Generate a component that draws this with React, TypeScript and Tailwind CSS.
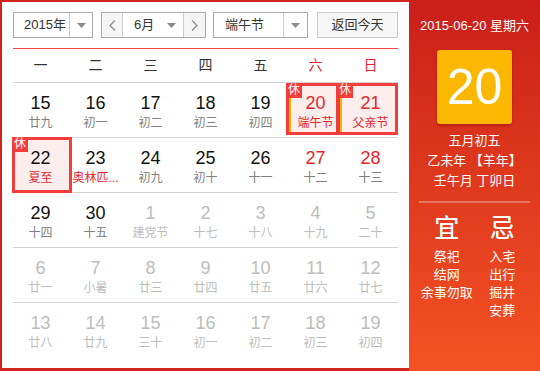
import React from 'react'

type Day = {
  n: number
  l: string
  other?: boolean
  fest?: boolean
  mark?: 'a' | 'b' | 'c'
  red?: boolean
}

const rows: Day[][] = [
  [
    { n: 15, l: '廿九' },
    { n: 16, l: '初一' },
    { n: 17, l: '初二' },
    { n: 18, l: '初三' },
    { n: 19, l: '初四' },
    { n: 20, l: '端午节', fest: true, red: true, mark: 'a' },
    { n: 21, l: '父亲节', fest: true, red: true, mark: 'b' },
  ],
  [
    { n: 22, l: '夏至', fest: true, mark: 'c' },
    { n: 23, l: '奥林匹...', fest: true },
    { n: 24, l: '初九' },
    { n: 25, l: '初十' },
    { n: 26, l: '十一' },
    { n: 27, l: '十二', red: true },
    { n: 28, l: '十三', red: true },
  ],
  [
    { n: 29, l: '十四' },
    { n: 30, l: '十五' },
    { n: 1, l: '建党节', other: true },
    { n: 2, l: '十七', other: true },
    { n: 3, l: '十八', other: true },
    { n: 4, l: '十九', other: true },
    { n: 5, l: '二十', other: true },
  ],
  [
    { n: 6, l: '廿一', other: true },
    { n: 7, l: '小暑', other: true },
    { n: 8, l: '廿三', other: true },
    { n: 9, l: '廿四', other: true },
    { n: 10, l: '廿五', other: true },
    { n: 11, l: '廿六', other: true },
    { n: 12, l: '廿七', other: true },
  ],
  [
    { n: 13, l: '廿八', other: true },
    { n: 14, l: '廿九', other: true },
    { n: 15, l: '三十', other: true },
    { n: 16, l: '初一', other: true },
    { n: 17, l: '初二', other: true },
    { n: 18, l: '初三', other: true },
    { n: 19, l: '初四', other: true },
  ],
]

const weekdays = ['一', '二', '三', '四', '五', '六', '日']

function Caret() {
  return (
    <svg width="9" height="5" viewBox="0 0 9 5" className="block">
      <path d="M0 0h9L4.5 5z" fill="#8a8a8a" />
    </svg>
  )
}

function Chevron({ dir }: { dir: 'l' | 'r' }) {
  return (
    <svg width="7" height="11" viewBox="0 0 7 11" className="block">
      <path
        d={dir === 'l' ? 'M6 0.5L1 5.5l5 5' : 'M1 0.5l5 5-5 5'}
        fill="none"
        stroke="#8a8a8a"
        strokeWidth="1.2"
      />
    </svg>
  )
}

// red frame + 休 badge behind the day text
function MarkBox({ mark }: { mark: 'a' | 'b' | 'c' }) {
  const pos =
    mark === 'a'
      ? 'top-0 bottom-[2px] -left-[2px] right-[4px]'
      : mark === 'b'
        ? 'top-0 bottom-[2px] -left-[6px] right-0'
        : '-top-px -bottom-px -left-[1px] -right-[4px]'
  return (
    <div className={`absolute ${pos} border-[3px] border-[#f23d3a] bg-[#fdeeee]`}>
      {mark !== 'c' && <div className="absolute left-0 top-0 bottom-0 w-[2px] bg-[#f7b500]" />}
      <div className="absolute -top-[3px] -left-[3px] w-[16px] h-[15px] bg-[#f23d3a] text-white text-[12px] leading-[15px] text-center">
        休
      </div>
    </div>
  )
}

function Cell({ d }: { d: Day }) {
  const num = d.other ? 'text-[#bdbdbd]' : d.red ? 'text-[#e3262b]' : 'text-[#111]'
  const lunar = d.other ? 'text-[#bdbdbd]' : d.fest ? 'text-[#e3262b]' : 'text-[#808080]'
  return (
    <div className="relative h-[54px] pt-[10px] text-center">
      {d.mark && <MarkBox mark={d.mark} />}
      <div className={`relative text-[18px] leading-[20px] ${num}`}>{d.n}</div>
      <div className={`relative text-[12px] leading-[20px] whitespace-nowrap ${lunar}`}>{d.l}</div>
    </div>
  )
}

export default function App() {
  return (
    <div className="w-[540px] h-[371px] flex font-['Liberation_Sans','Noto_Sans_CJK_SC',sans-serif] overflow-hidden">
      {/* Calendar */}
      <div className="w-[409px] h-full bg-white border-l-2 border-t-2 border-b-[3px] border-[#d3231d] px-[11px] pt-[10px]">
        <div className="h-[26px] flex text-[13px] text-[#333]">
          <div className="w-[80px] flex border border-[#aaa]">
            <div className="flex-1 pl-[10px] leading-[24px]">2015年</div>
            <div className="w-[23px] border-l border-[#ccc] flex items-center justify-center">
              <Caret />
            </div>
          </div>
          <div className="ml-[8px] w-[105px] flex border border-[#aaa]">
            <div className="w-[21px] bg-[#f5f5f5] border-r border-[#ccc] flex items-center justify-center">
              <Chevron dir="l" />
            </div>
            <div className="flex-1 flex items-center pl-[11px] pr-[7px]">
              <span className="flex-1 leading-[24px]">6月</span>
              <Caret />
            </div>
            <div className="w-[22px] bg-[#f5f5f5] border-l border-[#ccc] flex items-center justify-center">
              <Chevron dir="r" />
            </div>
          </div>
          <div className="ml-[7px] w-[95px] flex border border-[#aaa]">
            <div className="flex-1 pl-[11px] leading-[24px]">端午节</div>
            <div className="w-[24px] border-l border-[#ccc] flex items-center justify-center">
              <Caret />
            </div>
          </div>
          <div className="ml-[9px] w-[81px] border border-[#ccc] bg-[#f7f7f7] text-center leading-[24px]">
            返回今天
          </div>
        </div>

        <div className="mt-[10px] border-t border-[#f4473f]" />

        <div className="grid grid-cols-7 h-[34px] border-b border-[#d4d4d4] text-[14px] text-center leading-[33px]">
          {weekdays.map((w, i) => (
            <div key={w} className={i >= 5 ? 'text-[#e3262b]' : 'text-[#333]'}>
              {w}
            </div>
          ))}
        </div>

        {rows.map((r, i) => (
          <div
            key={i}
            className={`grid grid-cols-7 ${i < rows.length - 1 ? 'border-b border-[#d4d4d4]' : ''}`}
          >
            {r.map((d, j) => (
              <Cell key={j} d={d} />
            ))}
          </div>
        ))}
      </div>

      {/* Today panel */}
      <div className="flex-1 h-full bg-linear-to-b from-[#ca1d19] to-[#f45123] text-white text-center">
        <div className="pt-[16px] text-[13px] leading-[20px]">2015-06-20 星期六</div>
        <div className="mx-auto mt-[14px] w-[75px] h-[74px] rounded-[3px] bg-[#fcb800] shadow-[0_2px_3px_rgba(120,0,0,0.35)] text-[50px] leading-[74px]">
          20
        </div>
        <div className="mt-[7px] text-[13px] leading-[20px]">
          <div>五月初五</div>
          <div>乙未年 【羊年】</div>
          <div>壬午月 丁卯日</div>
        </div>
        <div className="mx-[10px] mt-[10px] h-[2px] bg-white/30" />
        <div className="grid grid-cols-2 px-[10px] mt-[10px]">
          <div>
            <div className="text-[25px] leading-[30px] [text-shadow:0_0_0.6px_#fff]">宜</div>
            <div className="mt-[5px] text-[13px] leading-[18px]">
              <div>祭祀</div>
              <div>结网</div>
              <div>余事勿取</div>
            </div>
          </div>
          <div>
            <div className="text-[25px] leading-[30px] [text-shadow:0_0_0.6px_#fff]">忌</div>
            <div className="mt-[5px] text-[13px] leading-[18px]">
              <div>入宅</div>
              <div>出行</div>
              <div>掘井</div>
              <div>安葬</div>
            </div>
          </div>
        </div>
      </div>
    </div>
  )
}
